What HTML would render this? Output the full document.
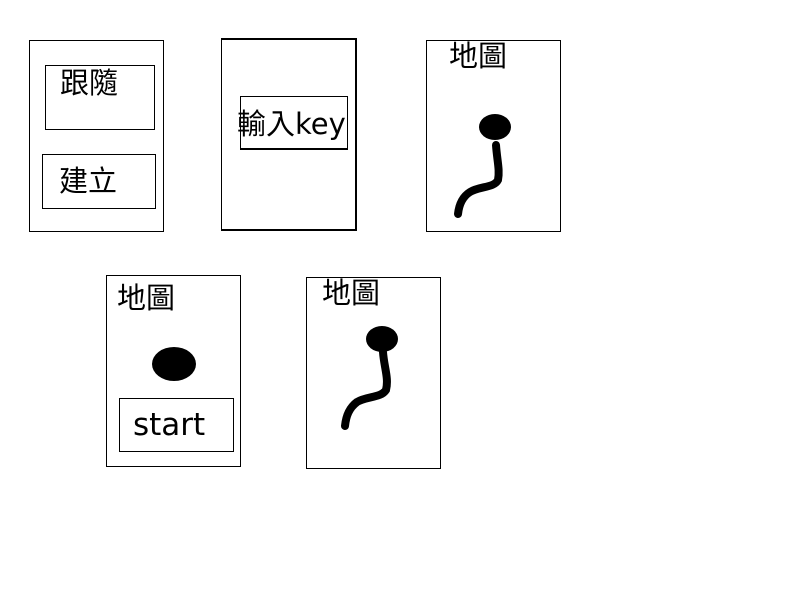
<!DOCTYPE html>
<html><head><meta charset="utf-8"><style>
body{margin:0;width:800px;height:600px;background:#fff;position:relative;overflow:hidden;font-family:"Liberation Sans","Noto Sans CJK TC",sans-serif;}
.b{position:absolute;border:1px solid #000;box-sizing:border-box;}
.t{position:absolute;color:#000;line-height:1;white-space:nowrap;}
.d{font-family:"DejaVu Sans","Noto Sans CJK TC",sans-serif;}
</style></head><body>
<div class="b" style="left:29px;top:40px;width:135px;height:192px"></div>
<div class="b" style="left:45px;top:65px;width:110px;height:65px"></div>
<div class="b" style="left:42px;top:154px;width:114px;height:55px"></div>
<div class="t" style="left:60px;top:70px;font-size:29px">跟隨</div>
<div class="t" style="left:59px;top:168px;font-size:29px">建立</div>

<div class="b" style="left:221px;top:38px;width:136px;height:193px;border-width:2px 2px 2px 1px"></div>
<div class="b" style="left:240px;top:96px;width:108px;height:54px;border-bottom-width:2px"></div>
<div class="t d" style="left:237px;top:110px;font-size:29px">輸入key</div>

<div class="b" style="left:426px;top:40px;width:135px;height:192px"></div>
<div class="t" style="left:449px;top:43px;font-size:29px">地圖</div>

<div class="b" style="left:106px;top:275px;width:135px;height:192px"></div>
<div class="t" style="left:117px;top:285px;font-size:29px">地圖</div>
<div class="b" style="left:119px;top:398px;width:115px;height:54px"></div>
<div class="t d" style="left:133px;top:410px;font-size:31px">start</div>

<div class="b" style="left:306px;top:277px;width:135px;height:192px"></div>
<div class="t" style="left:322px;top:280px;font-size:29px">地圖</div>

<svg width="800" height="600" style="position:absolute;left:0;top:0">
<ellipse cx="495" cy="127" rx="16" ry="13" fill="#000"/>
<path d="M496 145 C497 160 500 170 498 180 C494 188 480 186 470 192 C462 197 459 205 458 214" stroke="#000" stroke-width="8" fill="none" stroke-linecap="round"/>
<ellipse cx="174" cy="364" rx="22" ry="17" fill="#000"/>
<ellipse cx="382" cy="339" rx="16" ry="13" fill="#000"/>
<path d="M383 352 C384 367 389 378 386 390 C381 398 367 396 357 402 C349 408 346 416 345 426" stroke="#000" stroke-width="8" fill="none" stroke-linecap="round"/>
</svg>
</body></html>
